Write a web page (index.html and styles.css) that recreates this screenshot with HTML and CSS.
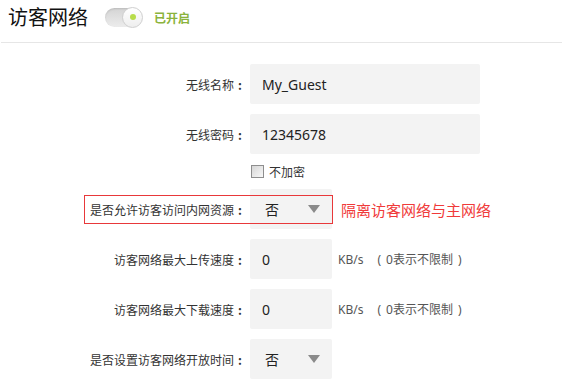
FILE: index.html
```html
<!DOCTYPE html>
<html lang="zh-CN">
<head>
<meta charset="utf-8">
<title>访客网络</title>
<link rel="stylesheet" href="styles.css">
</head>
<body>
<header class="head">
  <h1 class="title">访客网络</h1>
  <span class="switch"><span class="knob"><span class="dot"></span></span></span>
  <span class="status">已开启</span>
</header>
<form class="form">
  <div class="row">
    <label class="label">无线名称<span class="colon">:</span></label>
    <div class="input wide">My_Guest</div>
  </div>
  <div class="row">
    <label class="label">无线密码<span class="colon">:</span></label>
    <div class="input wide">12345678</div>
  </div>
  <div class="row check-row">
    <span class="label"></span>
    <label class="check"><span class="box"></span>不加密</label>
  </div>
  <div class="row annotated">
    <span class="mark"></span>
    <label class="label">是否允许访客访问内网资源<span class="colon">:</span></label>
    <div class="input select">否<span class="arrow"></span></div>
    <span class="note">隔离访客网络与主网络</span>
  </div>
  <div class="row">
    <label class="label">访客网络最大上传速度<span class="colon">:</span></label>
    <div class="input short">0</div>
    <span class="unit">KB/s<span class="open">(</span>0表示不限制<span class="close">)</span></span>
  </div>
  <div class="row">
    <label class="label">访客网络最大下载速度<span class="colon">:</span></label>
    <div class="input short">0</div>
    <span class="unit">KB/s<span class="open">(</span>0表示不限制<span class="close">)</span></span>
  </div>
  <div class="row">
    <label class="label">是否设置访客网络开放时间<span class="colon">:</span></label>
    <div class="input select">否<span class="arrow"></span></div>
  </div>
</form>
</body>
</html>
```
FILE: styles.css
```css
* { box-sizing: border-box; }
html, body { margin: 0; background: #fff; }
body {
  font-family: "Noto Sans", "Noto Sans CJK SC", sans-serif;
  color: #333;
  width: 562px;
  height: 392px;
  overflow: hidden;
}
.head {
  display: flex;
  align-items: center;
  height: 43px;
  margin-left: 1px;
  padding: 0 0 8px 7px;
  border-bottom: 1px solid #e6e6e6;
}
.title {
  margin: 0;
  font-family: "Noto Sans CJK SC", sans-serif;
  font-size: 20px;
  font-weight: normal;
  color: #111;
  line-height: 26px;
}
.switch {
  position: relative;
  margin-left: 17px;
  width: 37px;
  height: 19px;
  border-radius: 10px;
  background: linear-gradient(#d4d4d4, #ececec);
  box-shadow: inset 0 1px 2px rgba(0,0,0,0.12);
}
.knob {
  position: absolute;
  right: -1px;
  top: -1px;
  width: 21px;
  height: 21px;
  border-radius: 50%;
  background: linear-gradient(#ffffff, #eeeeee);
  border: 1px solid #cfcfcf;
  display: flex;
  align-items: center;
  justify-content: center;
}
.dot {
  width: 6px;
  height: 6px;
  border-radius: 50%;
  background: #b7dc4a;
}
.status {
  margin-left: 12px;
  font-family: "Noto Sans CJK SC", sans-serif;
  font-size: 12px;
  font-weight: bold;
  color: #8bb33c;
}
.form {
  display: flex;
  flex-direction: column;
  gap: 10px;
  padding-top: 21px;
}
.row {
  position: relative;
  display: flex;
  align-items: center;
  height: 40px;
}
.label {
  width: 250px;
  flex: none;
  padding-right: 4px;
  text-align: right;
  font-family: "Noto Sans CJK SC", sans-serif;
  font-size: 12px;
  color: #333;
}
.colon {
  display: inline-block;
  width: 12px;
  text-align: center;
  font-weight: bold;
}
.input {
  height: 40px;
  background: #f3f3f3;
  border-radius: 2px;
  display: flex;
  align-items: center;
  padding-left: 12px;
  font-size: 14px;
  color: #222;
}
.wide { width: 230px; }
.short { width: 82px; }
.select {
  width: 82px;
  font-family: "Noto Sans CJK SC", sans-serif;
  padding-left: 15px;
  justify-content: space-between;
  padding-right: 12px;
}
.arrow {
  width: 0;
  height: 0;
  border-left: 6px solid transparent;
  border-right: 6px solid transparent;
  border-top: 8px solid #8a8a8a;
}
.check-row { height: 15px; }
.check {
  display: flex;
  align-items: center;
  font-family: "Noto Sans CJK SC", sans-serif;
  font-size: 12px;
  color: #333;
  margin-left: 1px;
}
.box {
  width: 13px;
  height: 13px;
  margin-right: 5px;
  border: 1px solid #8e8e8e;
  background: linear-gradient(135deg, #d6d6d6, #f8f8f8);
}
.unit {
  margin-left: 6px;
  font-size: 12px;
  color: #555;
  font-family: "Noto Sans", "Noto Sans CJK SC", sans-serif;
}
.open { margin: 0 5px 0 14px; }
.close { margin-left: 5px; }
.mark {
  position: absolute;
  left: 84px;
  top: 6px;
  width: 249px;
  height: 29px;
  border: 1px solid #e8383a;
  pointer-events: none;
}
.note {
  margin-left: 9px;
  font-family: "Noto Sans CJK SC", sans-serif;
  font-size: 15px;
  color: #f03a3a;
}
```
